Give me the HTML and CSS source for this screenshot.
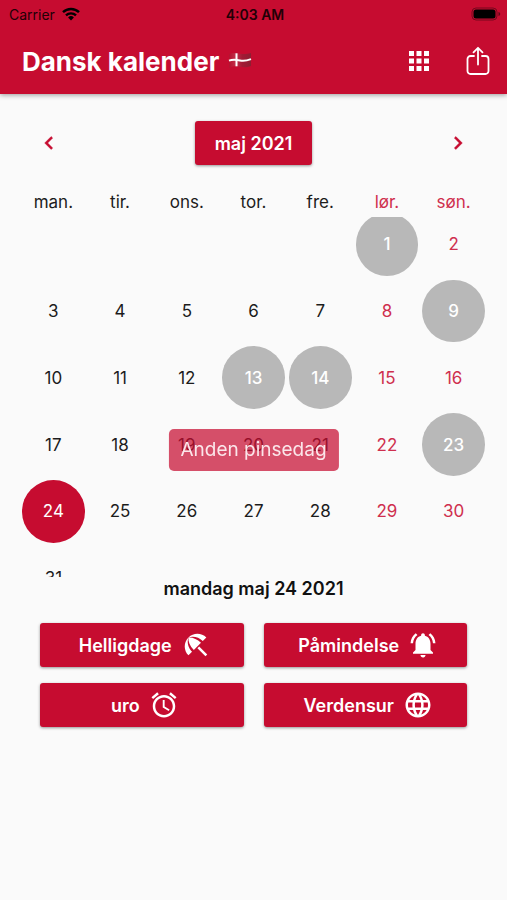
FILE: index.html
```html
<!DOCTYPE html>
<html lang="da">
<head>
    <meta charset="UTF-8">
    <meta name="viewport" content="width=device-width, initial-scale=1.0">
    <title>Dansk kalender</title>
    <link rel="stylesheet" href="styles.css">
</head>
<body>
    <header class="top">
        <div class="status">
            <div class="carrier">
                <span>Carrier</span>
                <svg width="18" height="14" viewBox="0 0 18 14">
                    <path d="M1 5.2a11.5 11.5 0 0 1 16 0M4 8.4a7.2 7.2 0 0 1 10 0" fill="none" stroke="#000" stroke-width="2.4"/>
                    <path d="M9 13.6l-2.9-3.1a4.2 4.2 0 0 1 5.8 0z"/>
                </svg>
            </div>
            <span class="time">4:03 AM</span>
            <div class="battery">
                <svg width="30" height="14" viewBox="0 0 30 14">
                    <rect x="1" y="1" width="25" height="12" rx="4" fill="none" stroke="#000" stroke-opacity=".4"/>
                    <rect x="2.500" y="2.500" width="22" height="9" rx="2.500"/>
                    <path d="M27.500 5v4c1-.4 1.700-1.100 1.700-2s-.7-1.600-1.700-2z" fill-opacity=".5"/>
                </svg>
            </div>
        </div>
        <div class="appbar">
            <h1>Dansk kalender</h1>
            <svg class="flag" width="24" height="20" viewBox="0 0 24 20">
                <defs>
                    <linearGradient id="wave" x1="0" x2="1">
                        <stop offset="0" stop-color="#b5122f"/>
                        <stop offset=".3" stop-color="#c2304a"/>
                        <stop offset=".6" stop-color="#a31a35"/>
                        <stop offset="1" stop-color="#8e1e32"/>
                    </linearGradient>
                </defs>
                <path d="M1 3c4-1.500 7-1 11-.3s7 .3 11-.7v13c-4 1.500-7 1.500-11 .8s-7-.8-11 1.200z" fill="url(#wave)"/>
                <path d="M8.500 2.300v13" stroke="#fff" stroke-width="2"/>
                <path d="M1 9.600c4-1.500 7-1 11-.2s7 .2 11-1.300" fill="none" stroke="#fff" stroke-width="2"/>
            </svg>
            <button class="icon-btn apps" aria-label="Apps">
                <svg width="22" height="22" viewBox="0 0 22 22" fill="currentColor">
                    <path d="M1 1h5v5H1zM8.500 1h5v5h-5zM16 1h5v5h-5zM1 8.500h5v5H1zM8.500 8.500h5v5h-5zM16 8.500h5v5h-5zM1 16h5v5H1zM8.500 16h5v5h-5zM16 16h5v5h-5z"/>
                </svg>
            </button>
            <button class="icon-btn" aria-label="Del">
                <svg width="24" height="30" viewBox="0 0 24 30" fill="none" stroke="currentColor" stroke-width="1.800" stroke-linecap="round" stroke-linejoin="round">
                    <path d="M8 10H4.500A3 3 0 0 0 1.500 13v12a3 3 0 0 0 3 3h15a3 3 0 0 0 3-3V13a3 3 0 0 0-3-3H16"/>
                    <path d="M12 18.500V2M7.500 6.300L12 1.800l4.500 4.500"/>
                </svg>
            </button>
        </div>
    </header>

    <main>
        <div class="month-nav">
            <button class="arrow" aria-label="Forrige måned">
                <svg width="26" height="26" viewBox="0 0 24 24" fill="currentColor"><path d="M15.410 7.410L14 6l-6 6 6 6 1.410-1.410L10.830 12z" stroke="currentColor" stroke-width=".4"/></svg>
            </button>
            <button class="btn month">maj 2021</button>
            <button class="arrow" aria-label="Næste måned">
                <svg width="26" height="26" viewBox="0 0 24 24" fill="currentColor"><path d="M10 6L8.590 7.410 13.170 12l-4.580 4.590L10 18l6-6z" stroke="currentColor" stroke-width=".4"/></svg>
            </button>
        </div>

        <table class="calendar">
            <thead>
                <tr>
                    <th>man.</th><th>tir.</th><th>ons.</th><th>tor.</th><th>fre.</th><th class="weekend">lør.</th><th class="weekend">søn.</th>
                </tr>
            </thead>
            <tbody id="days"></tbody>
        </table>

        <p class="date">mandag maj 24 2021</p>

        <div class="actions">
            <button class="btn">
                <span>Helligdage</span>
                <svg width="30" height="30" viewBox="0 0 24 24" fill="currentColor"><path d="M13.127 14.560l1.430-1.430 6.440 6.443L19.570 21zm4.293-5.730l2.860-2.860c-3.950-3.950-10.350-3.960-14.300-.02 3.930-1.300 8.310-.25 11.440 2.880zM5.950 5.980c-3.940 3.950-3.930 10.350.02 14.300l2.860-2.860C5.700 14.290 4.650 9.910 5.950 5.980zm.02-.02l-.01.010c-.38 3.010 1.170 6.880 4.300 10.020l5.730-5.730c-3.130-3.130-7.010-4.680-10.020-4.300z"/></svg>
            </button>
            <button class="btn">
                <span>Påmindelse</span>
                <svg width="30" height="30" viewBox="0 0 24 24" fill="currentColor"><path d="M7.580 4.080L6.150 2.650C3.750 4.480 2.170 7.300 2.030 10.500h2c.15-2.650 1.510-4.970 3.550-6.420zm12.390 6.420h2c-.15-3.200-1.730-6.020-4.120-7.850l-1.420 1.430c2.020 1.450 3.390 3.770 3.540 6.420zM18 11c0-3.070-1.640-5.640-4.500-6.320V4c0-.83-.67-1.500-1.500-1.500s-1.500.67-1.500 1.500v.68C7.630 5.360 6 7.920 6 11v5l-2 2v1h16v-1l-2-2v-5zm-6 11c.14 0 .27-.01.400-.04.650-.14 1.180-.58 1.440-1.180.1-.24.150-.5.150-.78h-4c.01 1.100.9 2 2.010 2z"/></svg>
            </button>
            <button class="btn">
                <span>uro</span>
                <svg width="30" height="30" viewBox="0 0 24 24" fill="currentColor"><path d="M22 5.720l-4.600-3.860-1.290 1.530 4.600 3.860L22 5.720zM7.880 3.390L6.600 1.860 2 5.710l1.290 1.530 4.590-3.850zM12.500 8H11v6l4.750 2.850.75-1.230-4-2.370V8zM12 4c-4.970 0-9 4.030-9 9s4.020 9 9 9c4.970 0 9-4.030 9-9s-4.030-9-9-9zm0 16c-3.870 0-7-3.130-7-7s3.130-7 7-7 7 3.130 7 7-3.130 7-7 7z"/></svg>
            </button>
            <button class="btn">
                <span>Verdensur</span>
                <svg width="30" height="30" viewBox="0 0 24 24" fill="currentColor"><path d="M11.990 2C6.470 2 2 6.480 2 12s4.470 10 9.990 10C17.520 22 22 17.520 22 12S17.520 2 11.990 2zm6.930 6h-2.950c-.32-1.250-.78-2.450-1.380-3.560 1.840.63 3.370 1.910 4.330 3.560zM12 4.040c.83 1.200 1.480 2.530 1.910 3.960h-3.820c.43-1.430 1.080-2.760 1.910-3.960zM4.260 14C4.100 13.360 4 12.690 4 12s.1-1.360.26-2h3.380c-.08.660-.14 1.320-.14 2s.06 1.340.14 2H4.260zm.82 2h2.950c.32 1.250.78 2.450 1.380 3.560-1.840-.63-3.370-1.900-4.330-3.560zm2.950-8H5.080c.96-1.660 2.490-2.930 4.330-3.560C8.810 5.550 8.350 6.750 8.030 8zM12 19.960c-.83-1.200-1.480-2.530-1.910-3.960h3.820c-.43 1.430-1.080 2.760-1.910 3.960zM14.340 14H9.660c-.09-.66-.16-1.320-.16-2s.07-1.350.16-2h4.680c.09.650.16 1.320.16 2s-.07 1.340-.16 2zm.25 5.560c.6-1.110 1.060-2.310 1.380-3.560h2.950c-.96 1.650-2.490 2.930-4.330 3.560zM16.360 14c.08-.66.14-1.320.14-2s-.06-1.340-.14-2h3.380c.16.640.26 1.310.26 2s-.1 1.360-.26 2h-3.380z"/></svg>
            </button>
        </div>
    </main>

    <div class="toast" role="status">Anden pinsedag</div>

    <script>
        const holidays = [1, 9, 13, 14, 23];
        const selected = 24;
        const firstColumn = 5; // 1. maj 2021 is a Saturday
        const body = document.getElementById('days');

        for (let week = 0; week < 6; week++) {
            const row = document.createElement('tr');
            for (let col = 0; col < 7; col++) {
                const cell = document.createElement('td');
                const day = week * 7 + col - firstColumn + 1;
                if (day > 0 && day <= 31) {
                    const button = document.createElement('button');
                    button.className = 'day';
                    button.textContent = day;
                    if (col > 4) button.classList.add('weekend');
                    if (holidays.includes(day)) button.classList.add('holiday');
                    if (day === selected) button.classList.add('selected');
                    cell.appendChild(button);
                }
                row.appendChild(cell);
            }
            body.appendChild(row);
        }
    </script>
</body>
</html>
```
FILE: styles.css
```css
* {
    margin: 0;
    padding: 0;
    box-sizing: border-box;
}
body {
    font-family: Inter, "Liberation Sans", sans-serif;
    font-size: 17px;
    color: #1c1c1c;
    background: #fafafa;
    min-height: 100vh;
}
button {
    font: inherit;
    color: inherit;
    border: none;
    background: none;
    cursor: pointer;
}
svg {
    display: block;
    flex: none;
}
.top {
    background: #c60c30;
    box-shadow: 0 1px 5px rgba(0, 0, 0, 0.4);
}
.status {
    display: grid;
    grid-template-columns: 1fr auto 1fr;
    align-items: center;
    height: 28px;
    padding: 0 6px 0 9px;
    font-size: 14px;
    color: #210006;
}
.carrier {
    display: flex;
    align-items: center;
    gap: 7px;
}
.time {
    font-weight: 600;
}
.battery {
    justify-self: end;
}
.appbar {
    display: flex;
    align-items: center;
    height: 66px;
    padding: 0 17px 0 22px;
    color: #fff;
}
h1 {
    font-size: 26px;
    font-weight: 700;
}
.flag {
    margin-left: 9px;
}
.icon-btn {
    display: block;
}
.apps {
    margin: 0 36px 0 auto;
}
.month-nav {
    display: flex;
    align-items: center;
    justify-content: space-between;
    padding: 27px 36px 0;
}
.arrow {
    color: #c60c30;
}
.btn {
    display: flex;
    align-items: center;
    justify-content: center;
    gap: 9px;
    height: 44px;
    border-radius: 3px;
    background: #c60c30;
    color: #fff;
    font-size: 18px;
    font-weight: 600;
    box-shadow: 0 1px 3px rgba(0, 0, 0, 0.4);
}
.month {
    padding: 0 20px;
}
.calendar {
    display: block;
    padding: 24px 20px 0;
}
.calendar thead {
    display: block;
}
.calendar tr {
    display: grid;
    grid-template-columns: repeat(7, 1fr);
}
.calendar th {
    height: 28px;
    line-height: 26px;
    font-weight: 400;
    text-align: center;
}
.calendar tbody {
    display: block;
    height: 360px;
    overflow: hidden;
}
.calendar tbody tr:first-child {
    margin-top: -6px;
}
.calendar td {
    aspect-ratio: 1;
    padding: 2px;
}
.weekend {
    color: #cf2f4e;
}
.day {
    display: block;
    width: 100%;
    height: 100%;
    border-radius: 50%;
}
.holiday {
    background: #b8b8b8;
    color: #fff;
    font-weight: 500;
}
.selected {
    background: #c60c30;
    color: #fff;
}
.date {
    line-height: 24px;
    font-size: 18px;
    font-weight: 600;
    color: #111;
    text-align: center;
}
.actions {
    display: grid;
    grid-template-columns: 1fr 1fr;
    gap: 16px 20px;
    padding: 22px 40px;
}
.actions .btn {
    padding-left: 6px;
}
/* sits in the middle of the screen, above the calendar */
.toast {
    position: fixed;
    top: 50%;
    left: 50%;
    transform: translate(-50%, -50%);
    padding: 9px 12px;
    border-radius: 5px;
    background: rgba(198, 12, 48, 0.72);
    color: #fbe6ea;
    font-size: 19px;
    line-height: 24px;
    white-space: nowrap;
}
```
